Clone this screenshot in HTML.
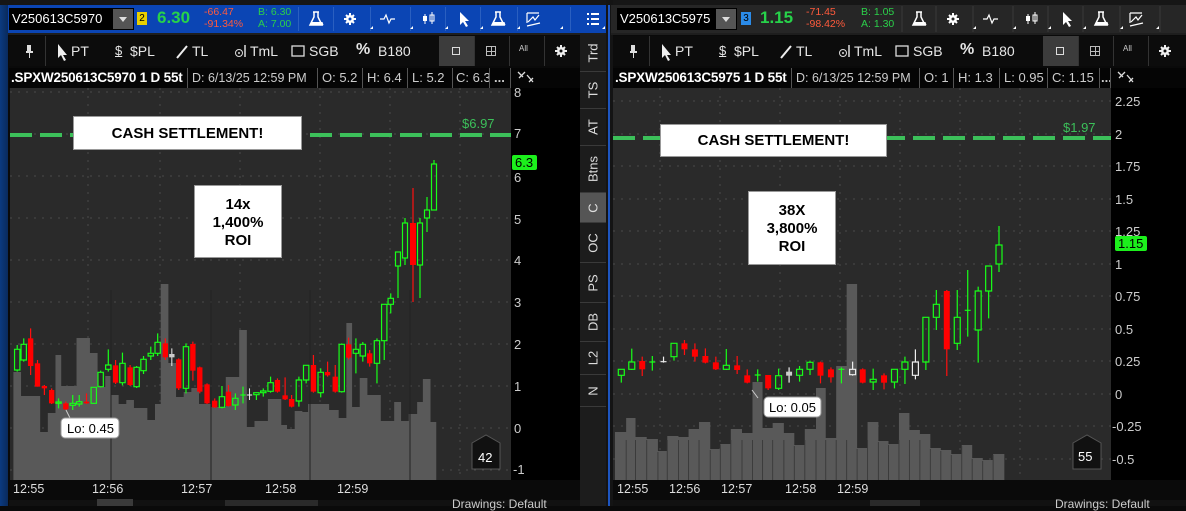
<!DOCTYPE html>
<html><head><meta charset="utf-8"><style>
*{margin:0;padding:0;box-sizing:border-box}
body{width:1186px;height:506px;background:#0a0a0a;overflow:hidden;position:relative;font-family:"Liberation Sans",Arial,sans-serif;color:#ddd}
.a{position:absolute}
.bar{position:absolute;top:5px;height:28px}
.sym{position:absolute;top:3px;height:22px;background:#000;color:#fff;font-size:13px;line-height:22px;padding-left:3px}
.dd{position:absolute;right:1px;top:1px;width:20px;height:20px;background:#555}
.dd:after{content:"";position:absolute;left:6px;top:8px;border:4px solid transparent;border-top:5px solid #ddd}
.sep{position:absolute;top:2px;width:1px;height:24px;background:#2a5fc0}
.tb{position:absolute;top:36px;height:30px;background:#0c0c0c;font-size:14px;color:#e6e6e6}
.tb span{position:absolute;top:7px}
.hd{position:absolute;top:68px;height:20px;background:#050505;font-size:13px;line-height:20px;color:#ccc;white-space:nowrap}
.hd span{position:absolute;top:0;border-right:1px solid #555;padding-left:4px;height:20px;overflow:hidden}
.tabs{position:absolute;left:580px;top:35px;width:26px;height:471px;background:#1c1c1c}
.tab{position:absolute;left:0;width:26px;border-bottom:1px solid #3a3a3a;color:#ddd;font-size:13px}
.tab i{position:absolute;left:50%;top:50%;transform:translate(-50%,-50%) rotate(-90deg);font-style:normal;white-space:nowrap}
.box{position:absolute;background:#fff;color:#000;font-weight:bold;text-align:center;border:1px solid #999}
.tm{position:absolute;top:482px;font-size:12.5px;color:#ddd}
</style></head><body>

<div class="a" style="left:0;top:0;width:8px;height:506px;background:linear-gradient(90deg,#0b3a80,#0a2a5c)"></div>
<div class="a" style="left:0;top:0;width:1186px;height:5px;background:#161616"></div>

<!-- LEFT TOP BAR -->
<div class="bar" style="left:8px;width:598px;background:#0b45b4">
 <div class="sym" style="left:1px;width:125px">V250613C5970<div class="dd"></div></div>
 <div class="a" style="left:129px;top:7px;width:10px;height:13px;background:#e8d000;color:#000;font-size:10px;text-align:center;line-height:13px">2</div>
 <div class="a" style="left:149px;top:3px;font-size:17px;font-weight:bold;color:#27d24a">6.30</div>
 <div class="a" style="left:196px;top:1px;font-size:10.5px;line-height:12px;color:#ff5a3c">-66.47<br>-91.34%</div>
 <div class="a" style="left:250px;top:1px;font-size:10.5px;line-height:12px;color:#2bd04a">B: 6.30<br>A: 7.00</div>
 <div class="sep" style="left:290px"></div><div class="sep" style="left:325px"></div><div class="sep" style="left:362px"></div><div class="sep" style="left:402px"></div><div class="sep" style="left:437px"></div><div class="sep" style="left:472px"></div><div class="sep" style="left:509px"></div><div class="sep" style="left:562px"></div>
 <svg class="a" style="left:0;top:0" width="598" height="28" fill="#fff" stroke="#fff">
  <path d="M305 7h6M306 7v5l-4 8h12l-4-8v-5" fill="none" stroke-width="1.5"/><path d="M303.5 17h11l1 3h-13z" stroke="none"/>
  <circle cx="342" cy="14" r="4" stroke="none"/><path d="M342 8v12M336 14h12M338 10l8 8M346 10l-8 8" stroke-width="2"/><circle cx="342" cy="14" r="1.5" stroke="none" fill="#0b45b4"/>
  <path d="M372 14h4l2-4 3 8 2-4h4" fill="none" stroke-width="1.2"/>
  <path d="M417 9v10M424 7v12" stroke-width="1"/><rect x="415" y="11" width="4" height="5" stroke="none"/><rect x="422" y="10" width="4" height="6" fill="none"/>
  <path d="M452 7v13l3-3 3 5 2-1-3-5h4z" stroke="none"/>
  <path d="M487 7h6M488 7v5l-4 8h12l-4-8v-5" fill="none" stroke-width="1.5"/><path d="M485.5 17h11l1 3h-13z" stroke="none"/>
  <path d="M519 8h12M519 8v10M520 17l5-5 2 3 4-5M519 21l13-3" fill="none" stroke-width="1.2"/>
  <path d="M579 9h2M579 14h2M579 19h2M583 9h8M583 14h8M583 19h8" stroke-width="2"/>
  <path d="M362 24h3v-3zM402 24h3v-3zM437 24h3v-3zM472 24h3v-3zM509 24h3v-3zM552 24h3v-3zM594 24h3v-3z" stroke="none"/>
 </svg>
</div>
<div class="a" style="left:8px;top:33px;width:598px;height:2px;background:#1e1e1e"></div>

<!-- LEFT TOOLBAR -->
<div class="tb" style="left:9px;width:571px">
 <div class="a" style="left:36px;top:0;width:1px;height:30px;background:#333"></div>
 <svg class="a" style="left:0;top:0" width="571" height="30"><path d="M18 9h4v6h2v2h-3v5h-1v-5h-3v-2h1z" fill="#ddd"/>
 <path d="M49 8v14l3-3 3 6 2-1-3-5h4z" fill="#eee"/>
 <path d="M168 22l10-12" stroke="#eee" stroke-width="2"/>
 <circle cx="230" cy="17" r="3.5" fill="none" stroke="#ddd"/><circle cx="230" cy="17" r="1" fill="#ddd"/><path d="M236 9v12" stroke="#ddd" stroke-width="1.5"/>
 <rect x="283" y="10" width="12" height="10" fill="none" stroke="#ddd" stroke-width="1.3"/>
 </svg>
 <span style="left:62px">PT</span>
 <span style="left:106px;text-decoration:underline;font-size:13px">$</span><span style="left:121px">$PL</span>
 <span style="left:183px">TL</span>
 <span style="left:241px">TmL</span>
 <span style="left:300px">SGB</span>
 <span style="left:347px;font-weight:bold;font-size:16px;top:5px">%</span><span style="left:369px">B180</span>
 <div class="a" style="left:430px;top:0;width:35px;height:30px;background:#3c3c3c"></div>
 <div class="a" style="left:443px;top:11px;width:8px;height:8px;border:1px solid #ddd"></div>
 <div class="a" style="left:465px;top:0;width:1px;height:30px;background:#333"></div>
 <div class="a" style="left:477px;top:10px;width:10px;height:10px;border:1px solid #bbb;background:linear-gradient(#bbb,#bbb) 4px 0/1px 10px no-repeat,linear-gradient(#bbb,#bbb) 0 4px/10px 1px no-repeat"></div>
 <div class="a" style="left:500px;top:0;width:1px;height:30px;background:#333"></div>
 <div class="a" style="left:510px;top:8px;font-size:8px;color:#ccc">All</div>
 <div class="a" style="left:535px;top:0;width:1px;height:30px;background:#333"></div>
 <svg class="a" style="left:545px;top:8px" width="14" height="14"><circle cx="7" cy="7" r="4" fill="#eee"/><path d="M7 1v12M1 7h12M3 3l8 8M11 3l-8 8" stroke="#eee" stroke-width="2"/><circle cx="7" cy="7" r="1.5" fill="#0c0c0c"/></svg>
</div>

<!-- LEFT HEADER -->
<div class="hd" style="left:9px;width:571px">
 <span style="left:0;width:179px;color:#fff;font-weight:bold;font-size:13.5px;letter-spacing:-0.2px;padding-left:2px">.SPXW250613C5970 1 D 55t</span>
 <span style="left:179px;width:130px;font-size:12.5px">D: 6/13/25 12:59 PM</span>
 <span style="left:309px;width:45px">O: 5.2</span>
 <span style="left:354px;width:45px">H: 6.4</span>
 <span style="left:399px;width:45px">L: 5.2</span>
 <span style="left:444px;width:37px;padding-left:3px">C: 6.3</span>
 <span style="left:481px;width:21px;font-weight:bold">...</span>
</div>
<svg class="a" style="left:516px;top:69px" width="20" height="16"><path d="M2 3l5 5M3 9l6-6M13 13l4-4M11 6l6 7" stroke="#ddd" stroke-width="1.3" fill="none"/></svg>

<!-- LEFT CHART -->
<svg class="a" style="left:0;top:0" width="606" height="506">
 <rect x="10" y="88" width="501" height="392" fill="#2a2a2a"/>
 <rect x="511" y="88" width="69" height="392" fill="#000"/>
 <g stroke="#4a4a4a" stroke-dasharray="2 6">
  <path d="M10 92H511M10 134H511M10 176H511M10 218H511M10 260H511M10 302H511M10 344H511M10 386H511M10 428H511M10 470H511"/>
  <path d="M88 88V480M160 88V480M240 88V480M320 88V480M390 88V480M460 88V480"/>
 </g>
 <g transform="scale(0.3827,1)"><path fill="#595959" d="M35 480V372H55V396H105V432H125V413H145V355H160V386H200V338H235V353H255V387H275V376H290V395H310V404H330V400H350V408H385V420H405V404H420V284H440V363H460V397H480V392H500V388H520V404H550V407H590V377H625V330H645V427H665V421H700V399H735V425H750V429H770V411H790V412H805V404H860V410H885V418H905V323H920V407H940V378H960V395H995V421H1030V402H1048V421H1068V414H1090V402H1105V379H1125V422H1140V480Z"/></g>
 <path d="M111 290V480M211 290V480M310 290V480M410 290V480" stroke="#222" stroke-width="1"/>
 <g transform="translate(0,280) scale(0.3827,0.33333)">
  <g stroke="#18ff18" fill="none" stroke-width="1.2">
   <path vector-effect="non-scaling-stroke" d="M45 195V208M45 270V275M62 175V193M62 240V245M153 355V366M153 370V385M190 345V370M190 376V390M207 345V365M207 372V380M245 370V372M263 272V277M263 320V322M283 208V255M283 268V275M320 218V250M320 308V316M357 258V262M357 320V324M375 228V238M375 272V282M394 200V220M394 228V240M412 160V187M412 220V228M486 190V200M486 325V340M580 318V350M580 382V385M615 340V355M615 375V390M628 345H642M635 320V370M670 344V360M688 325V333M688 338V350M707 290V308M707 334V338M781 290V300M781 363V380M800 300V310M838 265V277M838 338V352M893 190V193M893 335V338M930 175V208M930 220V280M948 186V193M948 228V245M985 175V182M985 250V310M1004 182V240M1021 40V55M1021 73V100"/>
   <path vector-effect="non-scaling-stroke" d="M38 208h14v62h-14zM55 193h14v47h-14zM146 366h14v4h-14zM183 370h14v6h-14zM200 365h14v7h-14zM238 322h14v48h-14zM256 277h14v43h-14zM276 255h14v13h-14zM313 250h14v58h-14zM350 262h14v58h-14zM368 238h14v34h-14zM387 220h14v8h-14zM405 187h14v33h-14zM479 200h14v125h-14zM573 350h14v32h-14zM608 355h14v20h-14zM663 338h14v6h-14zM681 333h14v5h-14zM700 308h14v26h-14zM774 300h14v63h-14zM793 256h14v44h-14zM831 277h14v61h-14zM886 193h14v142h-14zM923 208h14v12h-14zM941 193h14v35h-14zM978 182h14v68h-14zM997 73h14v109h-14zM1014 55h14v18h-14z"/>
  </g>
  <g stroke="#ff1010" stroke-width="1.2"><path vector-effect="non-scaling-stroke" d="M80 145V285M98 240V320M116 315V345M135 325V372M172 365V390M226 340V372M302 240V312M340 255V318M432 175V240M467 235V330M504 185V302M522 260V340M541 310V372M561 355V384M597 315V380M725 295V338M745 292V360M762 345V382M819 225V338M856 245V290M876 255V338M911 173V238M966 210V260"/></g>
  <g fill="#ff0000"><rect x="73" y="175" width="14" height="83"/><rect x="91" y="250" width="14" height="70"/><rect x="109" y="318" width="14" height="7"/><rect x="128" y="330" width="14" height="40"/><rect x="165" y="370" width="14" height="18"/><rect x="219" y="365" width="14" height="5"/><rect x="295" y="256" width="14" height="52"/><rect x="333" y="262" width="14" height="53"/><rect x="425" y="190" width="14" height="42"/><rect x="460" y="238" width="14" height="87"/><rect x="497" y="192" width="14" height="80"/><rect x="515" y="262" width="14" height="73"/><rect x="534" y="313" width="14" height="57"/><rect x="554" y="362" width="14" height="20"/><rect x="590" y="335" width="14" height="43"/><rect x="718" y="300" width="14" height="35"/><rect x="738" y="346" width="14" height="12"/><rect x="755" y="357" width="14" height="23"/><rect x="812" y="255" width="14" height="80"/><rect x="849" y="276" width="14" height="10"/><rect x="869" y="290" width="14" height="45"/><rect x="904" y="193" width="14" height="40"/><rect x="959" y="220" width="14" height="30"/></g>
  <g stroke="#eee"><path vector-effect="non-scaling-stroke" d="M449 205V258M645 345H659M652 325V360"/></g>
  <rect x="442" y="222" width="14" height="10" fill="#ccc"/>
 </g>
 <g stroke="#18ff18" fill="none" stroke-width="1.2">
  <path d="M398 266V298M405 218V223M405 258V265M420 218V223M420 265V298M427 197V210M427 218V232M434 160V164"/>
  <rect x="395.5" y="252" width="5" height="14"/><rect x="402.5" y="223" width="5" height="35"/><rect x="417.5" y="223" width="5" height="42"/><rect x="424.5" y="210" width="5" height="8"/><rect x="431.5" y="164" width="5" height="46"/>
 </g>
 <path d="M413 188V302" stroke="#ff1010" stroke-width="1.2"/><rect x="410" y="223" width="6" height="42" fill="#ff0000"/>
 <path d="M10 135H511" stroke="#3cc05a" stroke-width="4" stroke-dasharray="22 8"/>
 <path d="M66 410l4 8" stroke="#ccc"/>
 <rect x="61" y="418" width="58" height="20" rx="4" fill="#fff" stroke="#999"/>
 <text x="67" y="433" font-size="13" fill="#000" font-family="Liberation Sans">Lo: 0.45</text>
 <path d="M472 443l14-8 14 8v26h-28z" fill="#111" stroke="#555"/>
 <text x="478" y="462" font-size="13" fill="#fff" font-family="Liberation Sans">42</text>
 <text x="462" y="128" font-size="13" fill="#3cc05a" font-family="Liberation Sans">$6.97</text>
 <rect x="512" y="155" width="25" height="15" rx="2" fill="#1cf01c"/>
 <text x="515" y="167" font-size="13" fill="#000" font-family="Liberation Sans">6.3</text>
 <g font-size="13" fill="#ccc" font-family="Liberation Sans">
  <text x="514" y="97">8</text><text x="514" y="138">7</text><text x="514" y="182">6</text><text x="514" y="224">5</text><text x="514" y="265">4</text><text x="514" y="307">3</text><text x="514" y="349">2</text><text x="514" y="391">1</text><text x="514" y="433">0</text><text x="513" y="474">-1</text>
 </g>
</svg>
<div class="box" style="left:73px;top:116px;width:229px;height:34px;font-size:15px;line-height:33px">CASH SETTLEMENT!</div>
<div class="box" style="left:194px;top:185px;width:88px;height:73px;font-size:15px;line-height:18px;padding-top:10px">14x<br>1,400%<br>ROI</div>
<div class="tm" style="left:13px">12:55</div><div class="tm" style="left:92px">12:56</div><div class="tm" style="left:181px">12:57</div><div class="tm" style="left:265px">12:58</div><div class="tm" style="left:337px">12:59</div>
<div class="a" style="left:9px;top:500px;width:571px;height:6px;background:#111"></div>
<div class="a" style="left:97px;top:499px;width:36px;height:7px;background:#3a3a3a"></div>
<div class="a" style="left:225px;top:500px;width:93px;height:6px;background:#2a2a2a"></div>
<div class="a" style="left:452px;top:497px;font-size:12px;color:#ccc">Drawings: Default</div>

<!-- TABS -->
<div class="tabs">
 <div class="tab" style="top:0;height:37px"><i>Trd</i></div>
 <div class="tab" style="top:37px;height:37px"><i>TS</i></div>
 <div class="tab" style="top:74px;height:37px"><i>AT</i></div>
 <div class="tab" style="top:111px;height:47px"><i>Btns</i></div>
 <div class="tab" style="top:158px;height:30px;background:#555"><i>C</i></div>
 <div class="tab" style="top:188px;height:40px"><i>OC</i></div>
 <div class="tab" style="top:228px;height:40px"><i>PS</i></div>
 <div class="tab" style="top:268px;height:39px"><i>DB</i></div>
 <div class="tab" style="top:307px;height:33px"><i>L2</i></div>
 <div class="tab" style="top:340px;height:32px"><i>N</i></div>
</div>
<div class="a" style="left:606px;top:0;width:7px;height:506px;background:#141414"></div>
<div class="a" style="left:608px;top:5px;width:2px;height:501px;background:#1d55c0"></div>

<!-- RIGHT TOP BAR -->
<div class="bar" style="left:611px;width:575px;background:#262626">
 <div class="sym" style="left:6px;width:120px">V250613C5975<div class="dd"></div></div>
 <div class="a" style="left:130px;top:7px;width:10px;height:13px;background:#2b8be8;color:#000;font-size:10px;text-align:center;line-height:13px">3</div>
 <div class="a" style="left:149px;top:3px;font-size:17px;font-weight:bold;color:#27d24a">1.15</div>
 <div class="a" style="left:195px;top:1px;font-size:10.5px;line-height:12px;color:#ff5a3c">-71.45<br>-98.42%</div>
 <div class="a" style="left:250px;top:1px;font-size:10.5px;line-height:12px;color:#2bd04a">B: 1.05<br>A: 1.30</div>
 <svg class="a" style="left:0;top:0" width="575" height="28" fill="#fff" stroke="#fff">
  <path d="M291 1v26M325 1v26M362 1v26M402 1v26M437 1v26M472 1v26M509 1v26M549 1v26" stroke="#3a3a3a"/>
  <path d="M305 7h6M306 7v5l-4 8h12l-4-8v-5" fill="none" stroke-width="1.5"/><path d="M303.5 17h11l1 3h-13z" stroke="none"/>
  <circle cx="342" cy="14" r="4" stroke="none"/><path d="M342 8v12M336 14h12M338 10l8 8M346 10l-8 8" stroke-width="2"/><circle cx="342" cy="14" r="1.5" stroke="none" fill="#262626"/>
  <path d="M372 14h4l2-4 3 8 2-4h4" fill="none" stroke-width="1.2"/>
  <path d="M417 9v10M424 7v12" stroke-width="1"/><rect x="415" y="11" width="4" height="5" stroke="none"/><rect x="422" y="10" width="4" height="6" fill="none"/>
  <path d="M452 7v13l3-3 3 5 2-1-3-5h4z" stroke="none"/>
  <path d="M487 7h6M488 7v5l-4 8h12l-4-8v-5" fill="none" stroke-width="1.5"/><path d="M485.5 17h11l1 3h-13z" stroke="none"/>
  <path d="M519 8h12M519 8v10M520 17l5-5 2 3 4-5M519 21l13-3" fill="none" stroke-width="1.2"/>
  <path d="M362 24h3v-3zM402 24h3v-3zM437 24h3v-3zM472 24h3v-3zM509 24h3v-3zM545 24h3v-3z" stroke="none"/>
 </svg>
</div>
<div class="a" style="left:611px;top:33px;width:575px;height:2px;background:#1e1e1e"></div>

<!-- RIGHT TOOLBAR -->
<div class="tb" style="left:613px;width:573px">
 <div class="a" style="left:36px;top:0;width:1px;height:30px;background:#333"></div>
 <svg class="a" style="left:0;top:0" width="573" height="30"><path d="M18 9h4v6h2v2h-3v5h-1v-5h-3v-2h1z" fill="#ddd"/>
 <path d="M49 8v14l3-3 3 6 2-1-3-5h4z" fill="#eee"/>
 <path d="M168 22l10-12" stroke="#eee" stroke-width="2"/>
 <circle cx="230" cy="17" r="3.5" fill="none" stroke="#ddd"/><circle cx="230" cy="17" r="1" fill="#ddd"/><path d="M236 9v12" stroke="#ddd" stroke-width="1.5"/>
 <rect x="283" y="10" width="12" height="10" fill="none" stroke="#ddd" stroke-width="1.3"/>
 </svg>
 <span style="left:62px">PT</span>
 <span style="left:106px;text-decoration:underline;font-size:13px">$</span><span style="left:121px">$PL</span>
 <span style="left:183px">TL</span>
 <span style="left:241px">TmL</span>
 <span style="left:300px">SGB</span>
 <span style="left:347px;font-weight:bold;font-size:16px;top:5px">%</span><span style="left:369px">B180</span>
 <div class="a" style="left:430px;top:0;width:35px;height:30px;background:#3c3c3c"></div>
 <div class="a" style="left:443px;top:11px;width:8px;height:8px;border:1px solid #ddd"></div>
 <div class="a" style="left:465px;top:0;width:1px;height:30px;background:#333"></div>
 <div class="a" style="left:477px;top:10px;width:10px;height:10px;border:1px solid #bbb;background:linear-gradient(#bbb,#bbb) 4px 0/1px 10px no-repeat,linear-gradient(#bbb,#bbb) 0 4px/10px 1px no-repeat"></div>
 <div class="a" style="left:500px;top:0;width:1px;height:30px;background:#333"></div>
 <div class="a" style="left:510px;top:8px;font-size:8px;color:#ccc">All</div>
 <div class="a" style="left:535px;top:0;width:1px;height:30px;background:#333"></div>
 <svg class="a" style="left:545px;top:8px" width="14" height="14"><circle cx="7" cy="7" r="4" fill="#eee"/><path d="M7 1v12M1 7h12M3 3l8 8M11 3l-8 8" stroke="#eee" stroke-width="2"/><circle cx="7" cy="7" r="1.5" fill="#0c0c0c"/></svg>
</div>

<!-- RIGHT HEADER -->
<div class="hd" style="left:613px;width:573px">
 <span style="left:0;width:179px;color:#fff;font-weight:bold;font-size:13.5px;letter-spacing:-0.2px;padding-left:2px">.SPXW250613C5975 1 D 55t</span>
 <span style="left:179px;width:128px;font-size:12.5px">D: 6/13/25 12:59 PM</span>
 <span style="left:307px;width:34px">O: 1</span>
 <span style="left:341px;width:46px">H: 1.3</span>
 <span style="left:387px;width:48px">L: 0.95</span>
 <span style="left:435px;width:52px">C: 1.15</span>
 <span style="left:487px;width:11px;font-weight:bold;padding-left:1px">...</span>
</div>
<svg class="a" style="left:1116px;top:69px" width="20" height="16"><path d="M2 3l5 5M3 9l6-6M13 13l4-4M11 6l6 7" stroke="#ddd" stroke-width="1.3" fill="none"/></svg>

<!-- RIGHT CHART -->
<svg class="a" style="left:0;top:0" width="1186" height="506">
 <rect x="613" y="88" width="498" height="392" fill="#2a2a2a"/>
 <rect x="1111" y="88" width="75" height="392" fill="#000"/>
 <g stroke="#4a4a4a" stroke-dasharray="2 6">
  <path d="M613 101H1111M613 134H1111M613 166H1111M613 199H1111M613 231H1111M613 264H1111M613 296H1111M613 329H1111M613 361H1111M613 394H1111M613 426H1111M613 459H1111"/>
  <path d="M660 88V480M720 88V480M780 88V480M840 88V480M900 88V480M960 88V480M1020 88V480"/>
 </g>
 <g transform="translate(600,0) scale(0.3737,1)"><path fill="#595959" d="M40 480V432H70V418H95V437H125V439H155V451H180V436H210V437H237V429H265V422H295V449H322V444H350V429H380V433H408V382H435V428H462V423H492V433H520V445H548V429H578V388H604V438H632V366H660V284H688V448H716V422H745V441H772V444H800V413H828V430H856V434H884V448H912V450H940V454H968V445H996V458H1024V460H1052V454H1082V480Z"/>
 <path stroke="#3a3a3a" stroke-width="2.5" d="M70 440V480M95 440V480M125 440V480M155 452V480M180 440V480M210 440V480M237 440V480M265 440V480M295 450V480M322 445V480M350 440V480M380 440V480M408 440V480M435 440V480M462 440V480M492 440V480M520 446V480M548 440V480M578 440V480M604 440V480M632 440V480M660 440V480M688 449V480M716 440V480M745 442V480M772 445V480M800 440V480M828 440V480M856 440V480M884 449V480M912 451V480M940 455V480M968 446V480M996 459V480M1024 461V480M1052 455V480"/></g>
 <g transform="translate(600,280) scale(0.3737,0.33333)">
  <g stroke="#18ff18" fill="none">
   <path vector-effect="non-scaling-stroke" stroke-width="1.2" d="M57 286V308M85 206V246M85 268V270M132 246H148M140 228V272M198 230V242M338 207V256M338 268V270M414 285H430M422 268V305M478 266V287M478 325V330M534 258V268M534 286V305M562 242V247M562 268V285M638 268H654M646 262V310M731 266V298M731 306V330M788 306V325M816 230V246M816 268V312M872 246V270M900 30V73M900 112V150M956 30V112M956 190V210M976 91H992M984 -30V170M1012 20V33M1012 150V248M1040 33V115"/>
   <path vector-effect="non-scaling-stroke" stroke-width="1.2" d="M49 268h16v18h-16zM77 246h16v22h-16zM190 190h16v40h-16zM330 256h16v12h-16zM470 287h16v38h-16zM526 268h16v18h-16zM554 247h16v21h-16zM723 298h16v8h-16zM780 268h16v38h-16zM808 246h16v22h-16zM864 112h16v134h-16zM892 73h16v39h-16zM948 112h16v78h-16zM1004 33h16v117h-16zM1032 -42h16v75h-16z"/>
  </g>
  <g stroke="#ff1010"><path vector-effect="non-scaling-stroke" stroke-width="1.2" d="M113 230V288M226 180V225M254 190V245M282 205V250M310 230V270M367 228V282M394 268V310M450 285V330M590 245V310M618 262V308M703 265V310M760 280V328M928 30V288"/></g>
  <g fill="#ff0000"><rect x="105" y="243" width="16" height="25"/><rect x="218" y="190" width="16" height="18"/><rect x="246" y="208" width="16" height="22"/><rect x="274" y="228" width="16" height="20"/><rect x="302" y="247" width="16" height="21"/><rect x="359" y="256" width="16" height="14"/><rect x="386" y="286" width="16" height="22"/><rect x="442" y="285" width="16" height="40"/><rect x="582" y="247" width="16" height="40"/><rect x="610" y="268" width="16" height="24"/><rect x="695" y="268" width="16" height="40"/><rect x="752" y="286" width="16" height="22"/><rect x="920" y="33" width="16" height="175"/></g>
  <g stroke="#eee" fill="none"><path vector-effect="non-scaling-stroke" stroke-width="1.2" d="M162 245H178M170 230V248M506 262V308M676 245V268M676 284V287M844 208V246M844 286V298M668 268h16v16h-16zM836 246h16v40h-16z"/></g>
  <rect x="498" y="275" width="16" height="12" fill="#ccc"/>
 </g>
 <path d="M999 226V245M999 264V272" stroke="#18ff18" stroke-width="1.2"/><rect x="996" y="245" width="6" height="19" fill="none" stroke="#18ff18" stroke-width="1.2"/>
 <path d="M613 138H1111" stroke="#3cc05a" stroke-width="4" stroke-dasharray="22 8"/>
 <path d="M752 390l6 8" stroke="#ccc"/>
 <rect x="764" y="397" width="57" height="20" rx="4" fill="#fff" stroke="#999"/>
 <text x="769" y="412" font-size="13" fill="#000" font-family="Liberation Sans">Lo: 0.05</text>
 <path d="M1073 443l14-8 14 8v26h-28z" fill="#111" stroke="#555"/>
 <text x="1078" y="461" font-size="13" fill="#fff" font-family="Liberation Sans">55</text>
 <text x="1063" y="132" font-size="13" fill="#3cc05a" font-family="Liberation Sans">$1.97</text>
 <rect x="1115" y="236" width="32" height="15" rx="2" fill="#1cf01c"/>
 <text x="1118" y="248" font-size="13" fill="#000" font-family="Liberation Sans">1.15</text>
 <g font-size="13" fill="#ccc" font-family="Liberation Sans">
  <text x="1115" y="106">2.25</text><text x="1115" y="139">2</text><text x="1115" y="171">1.75</text><text x="1115" y="204">1.5</text><text x="1115" y="236">1.25</text><text x="1115" y="269">1</text><text x="1115" y="301">0.75</text><text x="1115" y="334">0.5</text><text x="1115" y="366">0.25</text><text x="1115" y="399">0</text><text x="1112" y="431">-0.25</text><text x="1112" y="464">-0.5</text>
 </g>
</svg>
<div class="box" style="left:660px;top:124px;width:227px;height:33px;font-size:15px;line-height:32px">CASH SETTLEMENT!</div>
<div class="box" style="left:748px;top:191px;width:88px;height:74px;font-size:15px;line-height:18px;padding-top:10px">38X<br>3,800%<br>ROI</div>
<div class="tm" style="left:617px">12:55</div><div class="tm" style="left:669px">12:56</div><div class="tm" style="left:721px">12:57</div><div class="tm" style="left:785px">12:58</div><div class="tm" style="left:837px">12:59</div>
<div class="a" style="left:613px;top:500px;width:573px;height:6px;background:#111"></div>
<div class="a" style="left:870px;top:500px;width:50px;height:6px;background:#2a2a2a"></div>
<div class="a" style="left:1055px;top:497px;font-size:12px;color:#ccc">Drawings: Default</div>
</body></html>
